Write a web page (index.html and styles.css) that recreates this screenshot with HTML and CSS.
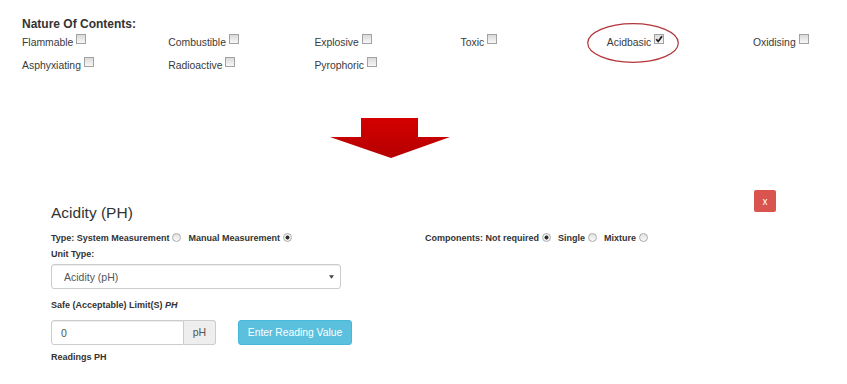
FILE: index.html
```html
<!DOCTYPE html>
<html lang="en">
    <head>
        <meta charset="UTF-8">
        <meta name="viewport" content="width=device-width, initial-scale=1.0">
        <title>Nature Of Contents</title>
        <link rel="stylesheet" href="styles.css">
    </head>
    <body>
        <div class="nature">
            <div class="nature-title">Nature Of Contents:</div>
            <div class="nature-grid">
                <label class="opt">Flammable<span class="check"></span></label>
                <label class="opt">Combustible<span class="check"></span></label>
                <label class="opt">Explosive<span class="check"></span></label>
                <label class="opt">Toxic<span class="check"></span></label>
                <label class="opt">Acidbasic<span class="check on"><svg viewBox="0 0 8 8"><path d="M1.2 4.2 L3.2 6.4 L7 1.2" fill="none" stroke="#1e1e1e" stroke-width="1.7"/></svg></span></label>
                <label class="opt">Oxidising<span class="check"></span></label>
                <label class="opt">Asphyxiating<span class="check"></span></label>
                <label class="opt">Radioactive<span class="check"></span></label>
                <label class="opt">Pyrophoric<span class="check"></span></label>
            </div>
            <!-- red ring drawn over the checked option -->
            <svg class="ring" viewBox="0 0 92 40"><ellipse cx="46" cy="20" rx="45.3" ry="19.3" fill="none" stroke="#b3353a" stroke-width="1.2"/></svg>
        </div>

        <svg class="arrow" viewBox="0 0 120 40">
            <defs>
                <linearGradient id="red" x1="0" y1="0" x2="0" y2="1">
                    <stop offset="0" stop-color="#d40000"/>
                    <stop offset="1" stop-color="#b50000"/>
                </linearGradient>
            </defs>
            <polygon points="31,0 88,0 88,19 120,19 61,40 0,19 31,19" fill="url(#red)"/>
        </svg>

        <div class="panel">
            <div class="panel-head">
                <h4 class="panel-title">Acidity (PH)</h4>
                <button class="btn-close">x</button>
            </div>
            <div class="meta-row">
                <div>Type: System Measurement<span class="radio"></span>Manual Measurement<span class="radio on"></span></div>
                <div>Components: Not required<span class="radio on"></span>Single<span class="radio"></span>Mixture<span class="radio"></span></div>
            </div>
            <div class="field-label">Unit Type:</div>
            <div class="select">
                <span>Acidity (pH)</span>
                <svg class="caret" viewBox="0 0 6 4"><polygon points="0,0 6,0 3,4" fill="#444"/></svg>
            </div>
            <div class="field-label limit">Safe (Acceptable) Limit(S) <i>PH</i></div>
            <div class="reading-row">
                <div class="input-group">
                    <input class="num" value="0">
                    <span class="addon">pH</span>
                </div>
                <button class="btn-read">Enter Reading Value</button>
            </div>
            <div class="field-label readings">Readings PH</div>
        </div>
    </body>
</html>
```

FILE: styles.css
```css
body {
    margin: 0;
    font-family: "Liberation Sans", Arial, sans-serif;
    color: #333;
}

/* top: nature of contents */
.nature {
    position: relative;
    padding: 17px 0 0 22px;
}
.nature-title {
    font-size: 12px;
    font-weight: bold;
    line-height: 15px;
}
.nature-grid {
    display: grid;
    grid-template-columns: repeat(5, 146.2px) auto;
    grid-auto-rows: 23px;
    font-size: 10.4px;
    line-height: 22px;
    color: #3a3a3a;
}
.check {
    display: inline-block;
    width: 8px;
    height: 8px;
    margin-left: 3px;
    border: 1px solid #a2a2a2;
    background: linear-gradient(#dadada, #f7f7f7);
    vertical-align: 2px;
}
.check svg {
    display: block;
    width: 8px;
    height: 8px;
}
.ring {
    position: absolute;
    left: 587px;
    top: 23px;
    width: 92px;
    height: 40px;
}

.arrow {
    display: block;
    width: 120px;
    height: 40px;
    margin: 40px 0 0 330px;
}

/* bottom: reading panel */
.panel {
    width: 725px;
    margin: 32px 0 0 51px;
    font-size: 9px;
    font-weight: bold;
    line-height: 16px;
}
.panel-head {
    display: flex;
    justify-content: space-between;
    align-items: flex-start;
    height: 33px;
}
.panel-title {
    margin: 14px 0 0;
    font-size: 15.5px;
    font-weight: normal;
    line-height: 18px;
}
.btn-close {
    width: 22px;
    height: 22px;
    padding: 0;
    border: 0;
    border-radius: 2px;
    background: #d9534f;
    color: #fff;
    font-family: inherit;
    font-size: 10px;
}
.meta-row {
    display: grid;
    grid-template-columns: 374px auto;
    margin-top: 7px;
}
.radio {
    display: inline-block;
    width: 7px;
    height: 7px;
    margin: 0 7px 0 3px;
    border: 1px solid #ababab;
    border-radius: 50%;
    background: linear-gradient(#e2e2e2, #fafafa);
    vertical-align: -1px;
}
.radio.on {
    background: radial-gradient(circle, #2b2b2b 0 1.7px, #f2f2f2 2.3px);
}
.select {
    display: flex;
    justify-content: space-between;
    align-items: center;
    box-sizing: border-box;
    width: 290px;
    height: 25px;
    margin-top: 2px;
    padding: 0 6px 0 12px;
    border: 1px solid #ccc;
    border-radius: 3px;
    box-shadow: inset 0 1px 1px rgba(0, 0, 0, .075);
    font-size: 10.5px;
    font-weight: normal;
    color: #555;
}
.caret {
    width: 5px;
    height: 4px;
}
.limit {
    margin-top: 8px;
}
.reading-row {
    display: flex;
    margin-top: 7px;
    height: 25px;
}
.input-group {
    display: flex;
    width: 165px;
}
.num {
    box-sizing: border-box;
    width: 133px;
    height: 25px;
    padding: 0 0 0 9px;
    border: 1px solid #ccc;
    border-radius: 3px 0 0 3px;
    box-shadow: inset 0 1px 1px rgba(0, 0, 0, .075);
    font-family: inherit;
    font-size: 10.5px;
    color: #555;
}
.addon {
    box-sizing: border-box;
    width: 32px;
    height: 25px;
    border: 1px solid #ccc;
    border-left: 0;
    border-radius: 0 3px 3px 0;
    background: #eee;
    font-size: 10.5px;
    font-weight: normal;
    line-height: 23px;
    text-align: center;
    color: #555;
}
.btn-read {
    width: 114px;
    height: 25px;
    margin-left: 22px;
    padding: 0;
    border: 1px solid #46b8da;
    border-radius: 3px;
    background: #5bc0de;
    color: #fff;
    font-family: inherit;
    font-size: 10.3px;
}
.readings {
    margin-top: 4px;
}
```
